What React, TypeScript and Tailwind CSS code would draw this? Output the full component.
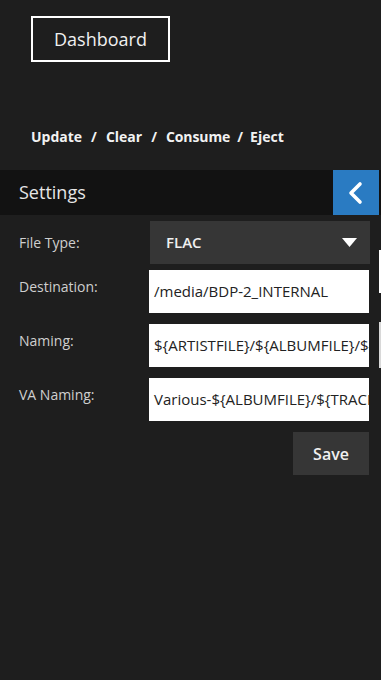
export default function App() {
  const font = { fontFamily: '"Open Sans", "Noto Sans", sans-serif' };
  return (
    <div className="relative min-h-[680px] w-[381px] overflow-hidden bg-[#1e1e1e] text-white" style={font}>
      <div className="px-[31px] pt-[16px]">
        <div className="flex h-[46px] w-[139px] items-center justify-center border-2 border-white text-[18px] text-[#f0f0f0]">
          Dashboard
        </div>
      </div>
      <div className="mt-[64px] flex items-center px-[31px] text-[14px] font-bold text-[#f2f2f2]">
        <span>Update</span>
        <span className="mx-[9px]">/</span>
        <span>Clear</span>
        <span className="mx-[9px]">/</span>
        <span className="tracking-[-0.1px]">Consume</span>
        <span className="mx-[7px]">/</span>
        <span>Eject</span>
      </div>
      <div className="mt-[23px] flex h-[45px] items-center justify-between bg-[#121212]">
        <span className="pl-[19px] text-[18px] text-[#e6e6e6]">Settings</span>
        <div className="mr-[2px] flex h-[45px] w-[46px] items-center justify-center bg-[#2a7bc2]">
          <svg width="20" height="24" viewBox="0 0 20 24">
            <path d="M14 3 L5 12 L14 21" fill="none" stroke="white" strokeWidth="3.6" strokeLinecap="round" strokeLinejoin="round" />
          </svg>
        </div>
      </div>
      <div className="mt-[6px] flex flex-col">
        <div className="flex items-center">
          <span className="w-[150px] pl-[19px] text-[14px] text-[#cfcfcf]">File Type:</span>
          <div className="flex h-[43px] w-[220px] items-center justify-between bg-[#363636] pl-[16px] pr-[13px]">
            <span className="text-[15px] font-semibold text-[#f0f0f0]">FLAC</span>
            <svg width="15" height="9" viewBox="0 0 15 9">
              <path d="M0 0 H15 L7.5 9 Z" fill="white" />
            </svg>
          </div>
        </div>
        {[
          ["Destination:", "/media/BDP-2_INTERNAL", "mt-[6px]"],
          ["Naming:", "${ARTISTFILE}/${ALBUMFILE}/${TRACKNUMBER}", "mt-[11px]"],
          ["VA Naming:", "Various-${ALBUMFILE}/${TRACKNUMBER}", "mt-[11px]"],
        ].map(([label, value, mt]) => (
          <div key={label} className={`flex items-start ${mt}`}>
            <span className="w-[149px] pl-[19px] pt-[6px] text-[14px] text-[#cfcfcf]">{label}</span>
            <div className="flex h-[43px] w-[220px] items-center overflow-hidden whitespace-nowrap bg-white pl-[5px] text-[15px] text-[#222]">
              {value}
            </div>
          </div>
        ))}
        <div className="mt-[11px] flex justify-end pr-[12px]">
          <div className="flex h-[43px] w-[76px] items-center justify-center bg-[#363636] text-[16px] font-semibold text-[#f0f0f0]">
            Save
          </div>
        </div>
      </div>
      <div className="absolute left-[379px] top-[250px] h-[43px] w-[2px] bg-white" />
      <div className="absolute left-[379px] top-[322px] h-[46px] w-[2px] bg-[#d8d8d8]" />
    </div>
  );
}
